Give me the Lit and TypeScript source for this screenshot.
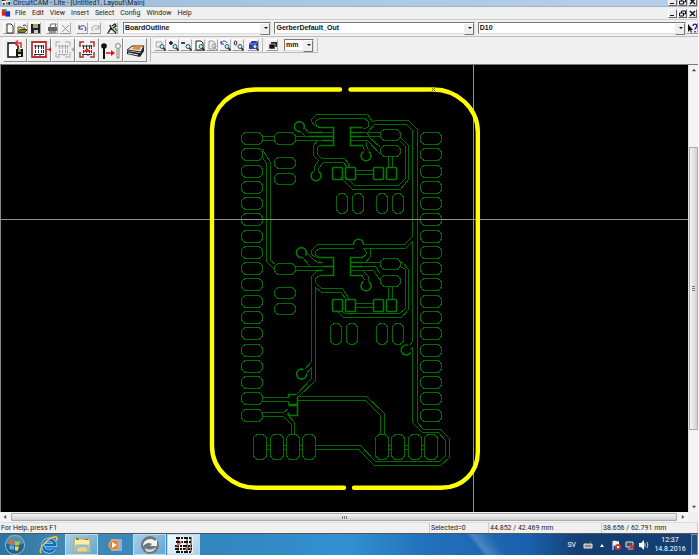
import { LitElement, html, svg, css } from "lit";
import { customElement } from "lit/decorators.js";

const padRows = Array.from({ length: 18 }, (_, i) => Math.round(132 + i * 16.27));

type Pad = [number, number, number, number];
const roundPads: Pad[] = [
  [274, 132, 21, 12], [274, 157, 21, 11], [274, 173, 21, 11],
  [274, 263, 21, 11], [274, 287, 21, 11], [274, 303, 21, 11],
  [380, 129, 20, 11], [380, 145, 20, 11], [380, 258, 20, 11], [380, 275, 20, 11],
  [336, 193, 11, 20], [352, 193, 11, 20], [376, 193, 11, 20], [392, 193, 11, 20],
  [330, 323, 11, 21], [346, 323, 11, 21], [376, 323, 11, 21], [392, 323, 11, 21],
  [253, 434, 13, 25], [270, 434, 13, 25], [286, 434, 13, 25], [302, 434, 13, 25],
  [375, 434, 13, 25], [391, 434, 13, 25], [408, 434, 13, 25], [424, 434, 13, 25],
];
const squarePads: Pad[] = [
  [332, 167, 10, 12], [345, 167, 10, 12], [373, 167, 10, 12], [386, 167, 10, 12],
  [332, 299, 10, 12], [345, 299, 10, 12], [373, 299, 10, 12], [386, 299, 10, 12],
];

const traces = [
  "M262 136H274M262 140H274M295 136H322M295 140H322",
  "M295 266H322M295 270H322",
  "M304 127L308 132H333M300 131L305 136",
  "M306 252L313 259L317 262M302 257L310 266",
  "M262 149L270 162V260L275 264M262 157L266 163V261L274 269",
  "M319 127L314 125L311 121V119L316 114H367L372 121L375 120H408L417 129V422L423 429H440L449 438V457L440 465H374L358 449H315",
  "M333 127H319L314 125M322 127L317 126L315 123V121L319 118H364L368 121V126L365 128H362",
  "M368 136L367 132L374 124H406L412 130V236L404 244H363M353 244H317L311 250V254L318 258M353 248H319L315 251V255L320 257M363 248H405L412 241V341L409 345",
  "M412 347L409 350M412 347V422L422 432H438L445 440V455L439 461H375L360 445H315",
  "M353 244C353 237 363 237 363 244M363 248C367 251 367 255 361 257M370 248V256L365 262",
  "M322 140H317L313 145V155L318 160L314 166V170M322 145H319L317 147V154L321 158H344L348 163L349 167M318 170V168L323 162H343L347 167",
  "M350 132H380M350 136H380M350 140H367L380 154M368 136L380 147",
  "M362 145L364 150M366 141V145L368 150",
  "M350 262H380M350 266H375L380 274M350 270H373L380 280M362 275L364 280M363 271L368 276V280",
  "M355 170H373M355 174H373M388 156V167M392 156V167",
  "M355 303H373M355 307H373M388 286V299M392 286V299",
  "M400 137L408 145V179L400 189H352L340 177M400 141L405 146V178L398 185H354L345 176",
  "M400 262H402L408 269V309L401 317H343L336 310M400 266L405 269V308L399 313H345L342 311",
  "M322 270H317L311 276V361L304 369M322 275H319L315 278V282L321 288H342L349 299",
  "M315 287V380L297 397M315 287L321 292H340L346 299M311 367V378L296 394M311 367L306 373",
  "M295 394H288V397H262M262 401H288V404M262 412H283L288 408M262 416H283L291 424V434M287 414L294 422V434",
  "M297 396H366L384 413V434M297 400H365L380 415V434",
  "M266 445H270M266 449H270M283 445H286M283 449H286M299 445H302M299 449H302M388 445H391M388 449H391M404 445H408M404 449H408M421 445H424M421 449H424",
];
const brightTraces = [
  "M318 127H333V145H320M362 127H350V145H362",
  "M318 257H333V275H320M362 257H350V275H362",
  "M308 132H322M308 136H333M322 140H333M317 262H322M322 266H333M322 270H316",
  "M350 132H362M350 136H362M350 262H362M350 266H362",
  "M288 404H297M288 405H297M297 396V415H288V412M288 397V394H296",
  "M303 129A5 5 0 1 0 300 131M318 171A5 5 0 1 1 313 171M368 151A5 5 0 1 1 363 151",
  "M305 255A5 5 0 1 0 302 257M368 281A5 5 0 1 1 363 281M353 244C353 237 363 237 363 244",
  "M410 352A5 5 0 1 1 408 345M306 373A5 5 0 1 1 303 369",
];

@customElement("layout-canvas")
export class LayoutCanvas extends LitElement {
  static styles = css`
    :host { display: block; min-width: 0; min-height: 0; background: #000; overflow: hidden; }
    .view { display: block; width: 100%; height: 100%; }
  `;
  render() {
    const rect = (p: Pad, r: number) => svg`<rect x=${p[0]} y=${p[1]} width=${p[2]} height=${p[3]} rx=${r} />`;
    return html`
      <svg class="view" viewBox="1 65 687 447" role="img" aria-label="Board layout">
        <g fill="none" transform="translate(.5 .5)">
          <g stroke="#006c00" stroke-width="1" shape-rendering="crispEdges">
            ${traces.map((d) => svg`<path d=${d} />`)}
            ${padRows.map((y) => [rect([241, y, 21, 12], 5), rect([420, y, 21, 12], 5)])}
            ${roundPads.map((p) => rect(p, 5))}
          </g>
          <g stroke="#007a00" stroke-width="1.600">
            ${brightTraces.map((d) => svg`<path d=${d} />`)}
            ${squarePads.map((p) => rect(p, 1))}
          </g>
        </g>
        <path d="M-400 219.500H1100M473.500 -400V1000" stroke="#929292" fill="none" />
        <g fill="none" stroke="#ff0" stroke-width="4.400" stroke-linecap="round">
          <path d="M340 89.500H256C230 89.500 212 108 212 130V446C212 470 233 487.800 256 487.800H344" />
          <path d="M350.500 89.500H433C457 89.500 477.800 108 477.800 132V452C477.800 472 463 487.800 441 487.800H354" />
        </g>
        <path d="M431.500 87.500l4 4m0-4l-4 4" stroke="#77733a" fill="none" />
      </svg>
    `;
  }
}

const page = svg`<path d="M3 1h4l2 2v7H3z" fill="#fff" stroke="#333"/>`;
const lens = svg`<circle cx="7" cy="6.500" r="2" fill="#bff3f3" stroke="#356"/><path d="M8.500 8l2 2.500" stroke="#222" stroke-width="1.500"/>`;
const chip = (c: string) => svg`<g stroke=${c} fill="none" stroke-width="1"><path d="M6 7h10M6 15.500h10M7.500 6v4M10.500 6v4M13.500 6v4M15.500 6v4M7.500 11v3M10.500 11v3M13.500 11v3M15.500 11v3M7 15v2M12 15v2"/></g>`;

const smallIcons: Record<string, unknown> = {
  New: page,
  Open: svg`<path d="M1 9V4h3l1 1h3v2" fill="#e8d94a" stroke="#554"/><path d="M1 9.500l2-3h7l-2 3z" fill="#8a8220" stroke="#443"/><path d="M6 2.500c2-1 3 0 3.500 1" stroke="#222" fill="none"/>`,
  Save: svg`<path d="M1 1h9v9H1z" fill="#222"/><path d="M3 1h5v4H3z" fill="#aaa36a"/><path d="M4 7h4v3H4z" fill="#ccc"/>`,
  Print: svg`<path d="M3 4l1-3h5l-1 3" fill="#fff" stroke="#666"/><path d="M1 4h9v4H1z" fill="#666"/><path d="M2 8h7v2H2z" fill="#999"/>`,
  Delete: svg`<path d="M2 2l7 7M9 2L2 9" stroke="#999" fill="none"/>`,
  Undo: svg`<path d="M2 2v4h4M2 5c3-4 7-2 7 1l-1 2" stroke="#2233a5" fill="none"/>`,
  Redo: svg`<path d="M9 2v4H5M9 5C6 1 2 3 2 6l1 2" stroke="#aaa" fill="none"/>`,
  Tools: svg`<path d="M1 10l3-5 5 5M4 5L3 2M5 3l3-2 1 2-3 2" stroke="#222" fill="none" stroke-width="1.400"/><path d="M8 5l2 3" stroke="#2a7a3a" stroke-width="1.400"/>`,
  "Zoom window": svg`<path d="M1 2h6v5H1z" fill="none" stroke="#aaa"/>${lens}`,
  "Zoom in": svg`<path d="M1 3h4M3 1v4" stroke="#111" stroke-width="1.500"/>${lens}`,
  "Zoom out": svg`<path d="M0 3h4" stroke="#111" stroke-width="1.500"/>${lens}`,
  "Zoom page": svg`<path d="M2 1h5l2 2v7H2z" fill="#fff" stroke="#222"/>${lens}`,
  "Zoom selection": svg`<path d="M2 1h4l2 2v6H2z" fill="#eee" stroke="#999"/><circle cx="7" cy="6" r="2" fill="none" stroke="#999"/><path d="M8 8l2 2" stroke="#999"/>`,
  "Zoom previous": svg`<path d="M1 1v3h3M1 3c2-3 5-2 6 0" stroke="#2233c0" fill="none"/>${lens}`,
  "Zoom original": svg`<ellipse cx="2.500" cy="3" rx="1.300" ry="2" stroke="#222" fill="none"/>${lens}`,
  "View 3D": svg`<path d="M1 4l3-3h6v6L8 9H1z" fill="#3434bd"/><path d="M1 4h6v5M7 4l3-3" stroke="#8888ee" fill="none"/>${lens}`,
  Layers: svg`<path d="M4 2h6v5H4z" fill="#222"/><path d="M2 4h6v5H2z" fill="#111" stroke="#eee" stroke-width=".6"/>`,
  "Context help": svg`<path d="M1 1v8l2-2 1 3 1-1-1-2h2z" fill="#111"/><path d="M6 3c0-3 4-2 4 0 0 1.500-2 1.500-2 3.500M8 8v1.500" stroke="#1c1c9c" fill="none" stroke-width="1.400"/>`,
};

const bigIcons: Record<string, unknown> = {
  Import: svg`<path d="M4 4h7l3 3v11H4z" fill="#fff" stroke="#111" stroke-width="1.500"/><path d="M12 10h7v8h-7z" fill="#111"/><path d="M14 10h3v3h-3z" fill="#999a50"/><path d="M14 15h3v2h-3z" fill="#ddd"/><path d="M17 9V4h-5M14 1.500L11 4l3 2.500" stroke="#e22" fill="none" stroke-width="1.500"/>`,
  "Output layer": svg`<path d="M4 3h14v15H4z" fill="#fff" stroke="#b33" stroke-width="1.800"/>${chip("#333")}<path d="M23 8v5l-3-2.500z" fill="#e11"/><path d="M19 10.500h3" stroke="#e11"/>`,
  "Output off": svg`<path d="M8 3H4v5M13 3h5v5M8 18H4v-5M13 18h5v-5" fill="none" stroke="#aaa"/>${chip("#aaa")}<path d="M22 8v5l-3-2.500z" fill="#aaa"/>`,
  "Output selection": svg`<path d="M8 3H4v5M14 3h4v5M8 18H4v-5M14 18h4v-5" fill="none" stroke="#a33" stroke-width="1.500"/>${chip("#333")}<path d="M7 13l4-4 4 4z" fill="#e22"/>`,
  Assign: svg`<circle cx="4" cy="7" r="2.800" fill="#111"/><path d="M4 8v12" stroke="#111" stroke-width="2"/><circle cx="18" cy="7" r="2.500" fill="none" stroke="#888"/><path d="M17 10v9h2v-9" fill="none" stroke="#888"/><path d="M6 14h7" stroke="#e11" stroke-width="1.500"/><path d="M11 11l4 3-4 3z" fill="#e11"/>`,
  Board: svg`<path d="M3 11l5-4h12l-3 6z" fill="#ddd" stroke="#222"/><path d="M8 10l3-3h7l-3 4z" fill="#f08a28"/><path d="M3 12l13 2v4L3 15zM16 14l4-6v4l-4 6z" fill="#222"/><path d="M4 14l10 2" stroke="#eee"/>`,
};

@customElement("app-root")
export class AppRoot extends LitElement {
  static styles = css`
    * { box-sizing: border-box; }
    :host {
      box-sizing: border-box; display: flex; flex-direction: column; height: 100vh; padding: 0 1px 4px 0;
      background: #fff; color: #222; font: 7px/10px Roboto, "Noto Sans", sans-serif; overflow: hidden;
    }
    button, select { margin: 0; padding: 0; font: inherit; color: inherit; border-radius: 0; }
    .title { display: flex; align-items: flex-end; height: 7px; background: linear-gradient(90deg, #9dbbd6, #abc8e3 45%, #b7d0ea); border-bottom: 1px solid #9fb3c6; }
    .title h1 { margin: 0 auto 0 0; font: inherit; line-height: 6px; white-space: nowrap; color: #18222c; }
    .logo { width: 10px; height: 8px; margin: 0 2px 0 1px; flex: none; }
    .bar { display: flex; align-items: center; height: 13px; background: #f0f0f0; border-bottom: 1px solid #ccc; }
    .menu { display: flex; gap: 6px; flex: 1; padding-left: 2px; }
    .menu button { border: 0; background: none; }
    .win { display: flex; padding-right: 1px; gap: 1px; }
    .win button { width: 9px; height: 9px; border: 1px solid; border-color: #fff #666 #666 #fff; background: #ececec; display: grid; place-items: center; }
    .win svg { width: 7px; height: 7px; display: block; }
    .tools { display: flex; align-items: center; height: 17px; padding: 0 0 0 3px; background: #f0f0f0; border-bottom: 1px solid #bbb; }
    .set { display: flex; flex: none; margin-right: 5px; gap: 1px; }
    .tool { width: 12px; height: 12px; border: 1px solid; border-color: #fff #aaa #999 #fff; background: #f0f0f0; display: grid; place-items: center; flex: none; }
    .tool svg { width: 11px; height: 11px; display: block; }
    .combos { display: grid; grid-template-columns: 149fr 201fr 209fr; gap: 3px; flex: 1; min-width: 0; }
    .combo { position: relative; display: block; height: 12px; border: 1px solid; border-color: #777 #ddd #ddd #777; background: #fff; }
    .combo select { appearance: none; display: block; width: 100%; height: 10px; padding: 0 10px 0 1px; border: 0; background: transparent; outline: 0; color: #111; font: bold 7px/10px "Liberation Sans", Arial, sans-serif; }
    .combo::before { content: ""; position: absolute; right: 0; top: 0; width: 8px; height: 10px; border: 1px solid; border-color: #fff #777 #777 #eee; background: #eee; pointer-events: none; }
    .combo::after { content: ""; position: absolute; right: 2px; top: 4px; border: 2px solid transparent; border-top-color: #111; pointer-events: none; }
    .second { display: flex; align-items: flex-start; height: 28px; padding: 1px 0 0 3px; background: #f0f0f0; border-bottom: 1px solid #777; }
    .bigset { display: flex; flex: none; padding-right: 3px; border-right: 1px solid #bbb; }
    .big { width: 24px; height: 24px; border: 1px solid; border-color: #fff #888 #888 #fff; background: #f0f0f0; display: grid; place-items: center; }
    .big svg { width: 24px; height: 22px; display: block; }
    .zooms { display: flex; align-items: center; gap: 3px; height: 15px; padding: 0 3px; border-right: 1px solid #bbb; border-bottom: 1px solid #bbb; }
    .zooms .set { margin: 0; }
    .units { gap: 6px; }
    .unit { width: 30px; }
    .work { display: grid; grid-template: minmax(0, 1fr) 10px / minmax(0, 1fr) 10px; flex: 1; min-height: 0; background: #f0f0f0; }
    .canvas { border-left: 1px solid #888; }
    .vbar { display: flex; flex-direction: column; align-items: center; justify-content: space-between; padding: 3px 0; background: #f4f4f4; border-left: 1px solid #ddd; }
    .hbar { display: flex; align-items: center; justify-content: space-between; padding: 0 3px; background: #f4f4f4; }
    .vthumb { flex: 0 0 64%; width: 9px; border: 1px solid #aaa; background: linear-gradient(90deg, #f4f4f4, #d2d2d2); display: grid; place-items: center; }
    .hthumb { flex: 1; height: 8px; margin: 0 4px; border: 1px solid #aaa; border-radius: 1px; background: linear-gradient(#f4f4f4, #cfcfcf); display: grid; place-items: center; }
    .grip { width: 5px; height: 3px; background: repeating-linear-gradient(90deg, #777 0 1px, transparent 1px 2px); }
    .vthumb .grip { width: 3px; height: 5px; background: repeating-linear-gradient(#777 0 1px, transparent 1px 2px); }
    .arrow { width: 4px; height: 4px; display: block; fill: #444; flex: none; }
    .status { display: grid; grid-template-columns: 430fr 59fr 113fr 96fr; height: 11px; background: #f0f0f0; border-top: 1px solid #ddd; white-space: nowrap; }
    .status span { padding-left: 1px; border-right: 1px solid #ccc; }
    .task {
      display: flex; align-items: center; height: 22px; border-top: 1px solid #555; color: #fff;
      background: linear-gradient(52deg, transparent 81%, #6fa0cf88 82%, transparent 85%) 0 0 / 83% 100% no-repeat,
        linear-gradient(90deg, #2d74a3, #4389b3 10%, #3286bd 30%, #3290d2 50%, #2271ba 61%, #1a60ac 76%, #143d72 83%, #163f70);
    }
    .app { width: 33px; height: 21px; border: 0; background: none; display: grid; place-items: center; margin-right: 1px; }
    .app svg { width: 24px; height: 20px; display: block; }
    .start { width: 30px; }
    .open { border: 1px solid #bcdcee; background: linear-gradient(135deg, #bfdff0cc, #6eb0dacc); }
    .shown { background: linear-gradient(135deg, #f4fbff, #a9cfe9); }
    .tray { display: flex; align-items: center; gap: 4px; margin-left: auto; }
    .tray span { margin-right: 3px; }
    .tray svg { width: 10px; height: 10px; display: block; }
    .clock { width: 34px; text-align: center; line-height: 9px; }
    .peek { width: 7px; height: 21px; border: 1px solid #6c8fb5; background: #1c4e85; padding: 0; }
  `;

  private tool(name: string) {
    return html`<button class="tool" aria-label=${name}><svg viewBox="0 0 11 11">${smallIcons[name]}</svg></button>`;
  }
  private combo(label: string, value: string, extra = "") {
    return html`<label class="combo ${extra}"><select aria-label=${label}><option>${value}</option></select></label>`;
  }
  private windowButtons(area: string) {
    return html`<div class="win">
      <button aria-label="Minimize ${area}"><svg viewBox="0 0 7 7"><path d="M1 5.500h4" stroke="#111" /></svg></button>
      <button aria-label="Restore ${area}"><svg viewBox="0 0 7 7"><path d="M2.500 3V1h4v3H5M.5 3h4v3h-4z" stroke="#111" fill="none" /></svg></button>
      <button aria-label="Close ${area}"><svg viewBox="0 0 7 7"><path d="M1 1l5 5M6 1L1 6" stroke="#111" stroke-width="1.400" /></svg></button>
    </div>`;
  }

  render() {
    return html`
      <header class="title">
        <svg class="logo" viewBox="0 0 11 8"><path d="M1 0h9v7H1z" fill="#eee" /><path d="M1 1h3v2H1zM6 0h4v2H6zM2 5h2v2H2zM6 4h1v3H6zM8 4h2v3H8z" fill="#222" /><path d="M4 3l3-2" stroke="#b63" /></svg>
        <h1>CircuitCAM - Lite - [Untitled1, Layout\\Main]</h1>
        ${this.windowButtons("program")}
      </header>
      <nav class="bar">
        <svg class="logo" viewBox="0 0 11 8"><path d="M1 0h5v7H1z" fill="#e02020" /><path d="M5 2h5v6H5z" fill="#2030d0" /><path d="M3 0h3v3H3z" fill="#1ba040" /></svg>
        <div class="menu">
          ${["File", "Edit", "View", "Insert", "Select", "Config", "Window", "Help"].map((m) => html`<button>${m}</button>`)}
        </div>
        ${this.windowButtons("document")}
      </nav>
      <div class="tools">
        <div class="set">${["New", "Open", "Save"].map((n) => this.tool(n))}</div>
        <div class="set">${["Print", "Delete"].map((n) => this.tool(n))}</div>
        <div class="set">${["Undo", "Redo"].map((n) => this.tool(n))}</div>
        <div class="set">${this.tool("Tools")}</div>
        <div class="combos">
          ${this.combo("Layer", "BoardOutline")} ${this.combo("Job", "GerberDefault_Out")} ${this.combo("Aperture", "D10")}
        </div>
        ${this.tool("Context help")}
      </div>
      <div class="second">
        <div class="bigset">
          ${Object.keys(bigIcons).map((n) => html`<button class="big" aria-label=${n}><svg viewBox="0 0 24 22">${bigIcons[n]}</svg></button>`)}
        </div>
        <div class="zooms">
          <div class="set">
            ${["Zoom window", "Zoom in", "Zoom out", "Zoom page", "Zoom selection", "Zoom previous", "Zoom original"].map((n) => this.tool(n))}
          </div>
          <div class="set">${this.tool("View 3D")}</div>
        </div>
        <div class="zooms units">
          <div class="set">${this.tool("Layers")}</div>
          ${this.combo("Unit", "mm", "unit")}
        </div>
      </div>
      <main class="work">
        <layout-canvas class="canvas"></layout-canvas>
        <div class="vbar">
          <svg class="arrow" viewBox="0 0 5 5"><path d="M0 4l2.500-3L5 4z" /></svg>
          <div class="vthumb"><i class="grip"></i></div>
          <svg class="arrow" viewBox="0 0 5 5"><path d="M0 1l2.500 3L5 1z" /></svg>
        </div>
        <div class="hbar">
          <svg class="arrow" viewBox="0 0 5 5"><path d="M4 0L1 2.500 4 5z" /></svg>
          <div class="hthumb"><i class="grip"></i></div>
          <svg class="arrow" viewBox="0 0 5 5"><path d="M1 0l3 2.500L1 5z" /></svg>
        </div>
      </main>
      <div class="status"><span>For Help, press F1</span><span>Selected=0</span><span>44.852 / 42.469 mm</span><span>38.656 / 62.791 mm</span></div>
      <footer class="task">
        <button class="app start" aria-label="Start"><svg viewBox="0 0 24 20"><circle cx="12" cy="10" r="9.500" fill="#2a5f86" stroke="#8fc0d8" /><path d="M3 8a9 9 0 0 1 18 0c-5 3-13 3-18 0" fill="#7fa8bd" opacity=".6" /><path d="M7 6c2-1 3-1 4 0v4c-2-1-3-1-5 0z" fill="#ef6530" /><path d="M12 6c2 1 3 1 5 0l-1 4c-2 1-3 1-4 0z" fill="#8fd04c" /><path d="M6 11c2-1 3-1 5 0v4c-2-1-3-1-4 0z" fill="#49b2ee" /><path d="M12 11c2 1 3 1 4 0l-1 4c-1 1-2 1-3 0z" fill="#ffd43c" /></svg></button>
        <button class="app" aria-label="Internet Explorer"><svg viewBox="0 0 24 20"><path d="M18 14a6 6 0 1 1 1-4H9" fill="none" stroke="#8fdcfb" stroke-width="4" /><path d="M18 14a6 6 0 1 1 1-4H9" fill="none" stroke="#1668c6" stroke-width="2.600" /><path d="M5 18C2 15 10 4 18 2c3-1 4 1 2 4" fill="none" stroke="#f0c83c" stroke-width="1.500" /></svg></button>
        <button class="app open" aria-label="Explorer"><svg viewBox="0 0 24 20"><path d="M4 3h6l1 1h9v13H4z" fill="#f1d57c" stroke="#c9a750" /><path d="M5 5h14v4H5z" fill="#fbedb0" /><path d="M6 3h3v2H6z" fill="#48a050" /><path d="M15 4h3v1h-3z" fill="#c55" /><path d="M6 17v-3c0-2 1-3 3-3h6c2 0 3 1 3 3v3" fill="none" stroke="#86c2e6" stroke-width="2.500" /></svg></button>
        <button class="app" aria-label="Media Player"><svg viewBox="0 0 24 20"><path d="M7 4h11v12H7z" fill="#8fc3e2" opacity=".8" /><circle cx="10" cy="10" r="5" fill="#f07a22" stroke="#f6b27c" /><path d="M8 7l5 3-5 3z" fill="#fff" /></svg></button>
        <button class="app open" aria-label="Sync"><svg viewBox="0 0 24 20"><circle cx="12" cy="10" r="9" fill="#70777b" /><path d="M5 11c0-4 3-7 8-7 2 0 3 1 4 2l2-2v7h-7l2-2c-3-2-6-1-9 2z" fill="#f2f2f2" /><path d="M7 13c3 2 8 2 11-1-1 4-4 5-7 5-2 0-4-1-4-4z" fill="#d5d8da" /></svg></button>
        <button class="app open shown" aria-label="CircuitCAM"><svg viewBox="0 0 24 20"><path d="M3 2h18v16H3z" fill="#f3f3f3" /><path d="M4 3h16M4 7h16M3 11h17M3 14h17M4 17h16" stroke="#111" stroke-dasharray="4 1 2 1" stroke-width="2" /><path d="M6 2v15M15 2v16M19 2v15" stroke="#222" /><path d="M5 11l5-5M13 15l4-3" stroke="#e0603a" stroke-width="1.500" /></svg></button>
        <div class="tray">
          <span>SV</span>
          <svg viewBox="0 0 10 10"><path d="M1 4h8v4H1z" fill="#aaa" stroke="#ddd" /><path d="M2 6h6M5 4l3-3" stroke="#666" fill="none" /></svg>
          <svg viewBox="0 0 10 10"><path d="M3 7l2-3 2 3z" fill="#fff" /></svg>
          <svg viewBox="0 0 10 10"><path d="M2 1v9" stroke="#fff" /><path d="M2 1c3-1 4 1 6 0v5c-3 1-4-1-6 0z" fill="#eee" /><circle cx="7" cy="7" r="3" fill="#d43a36" /><path d="M6 6l2 2m0-2L6 8" stroke="#fff" /></svg>
          <svg viewBox="0 0 10 10"><path d="M1 2h7v5H1zM3 9h5" fill="#456" stroke="#ddd" /><path d="M5 5l4 4m0-4L5 9" stroke="#e22" stroke-width="1.500" /></svg>
          <svg viewBox="0 0 10 10"><path d="M0 3h2l3-3v10L2 7H0z" fill="#fff" /><path d="M6 3v4M8 2c1 2 1 4 0 6" stroke="#cde" fill="none" /></svg>
          <time class="clock">12:37<br />14.8.2016</time>
          <button class="peek" aria-label="Show desktop"></button>
        </div>
      </footer>
    `;
  }
}
